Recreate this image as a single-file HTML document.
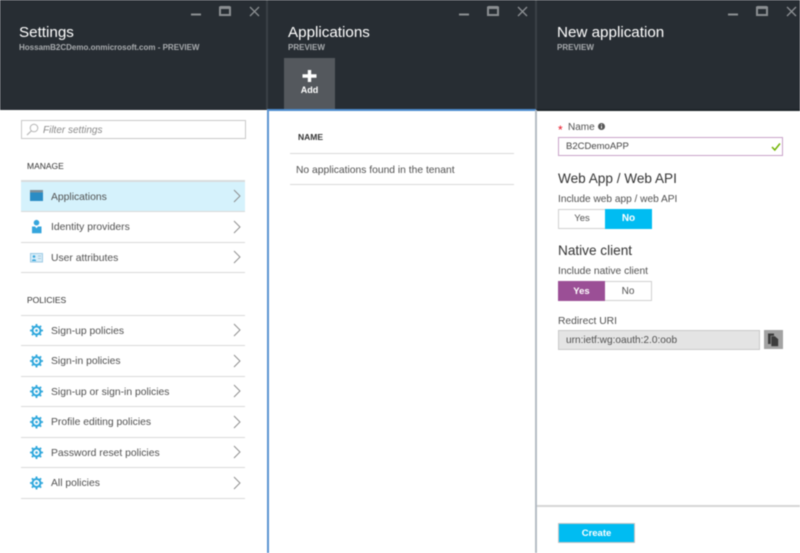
<!DOCTYPE html>
<html><head><meta charset="utf-8"><style>
html,body{margin:0;padding:0;width:800px;height:553px;overflow:hidden;background:#fff}
body{font-family:"Liberation Sans",sans-serif;position:relative}
#w{position:absolute;left:0;top:0;width:800px;height:553px;filter:blur(.4px);overflow:hidden}
.a,.t{position:absolute;white-space:nowrap}
.hd{position:absolute;top:0;height:110px;background:#272d33}
.h1{position:absolute;top:22.5px;font-size:15.2px;line-height:20px;color:#fff}
.sub{position:absolute;top:42px;font-size:8px;line-height:12px;font-weight:bold;color:#a9acaf}
.line{position:absolute;height:1px;background:#d9d9d9}
.item{position:absolute;left:51px;font-size:10.35px;line-height:14px;color:#505050}
.sec{position:absolute;left:27px;font-size:8.5px;line-height:12px;color:#333}
</style></head><body><div id="w">
<div class="hd" style="left:0;width:800px"></div>
<div class="a" style="left:266px;top:0;width:2px;height:110px;background:#3a4046"></div>
<div class="a" style="left:535px;top:0;width:2px;height:110px;background:#3a4046"></div>

<svg class="a" style="left:0;top:0" width="800" height="24" fill="none" stroke="#8b8f92">
<g><path d="M191 14.500h10" stroke-width="2"/><rect x="220" y="7.500" width="10" height="7.500" stroke-width="2"/><path d="M220 7.500h10" stroke-width="3"/><path d="M250 7l9 9M259 7l-9 9" stroke-width="1.300"/></g>
<g transform="translate(268 0)"><path d="M191 14.500h10" stroke-width="2"/><rect x="220" y="7.500" width="10" height="7.500" stroke-width="2"/><path d="M220 7.500h10" stroke-width="3"/><path d="M250 7l9 9M259 7l-9 9" stroke-width="1.300"/></g>
<g transform="translate(537 0)"><path d="M191 14.500h10" stroke-width="2"/><rect x="220" y="7.500" width="10" height="7.500" stroke-width="2"/><path d="M220 7.500h10" stroke-width="3"/><path d="M250 7l9 9M259 7l-9 9" stroke-width="1.300"/></g>
</svg>

<div class="h1" style="left:19px">Settings</div>
<div class="sub" style="left:19px">HossamB2CDemo.onmicrosoft.com - PREVIEW</div>
<div class="h1" style="left:288px">Applications</div>
<div class="sub" style="left:288px">PREVIEW</div>
<div class="h1" style="left:557px">New application</div>
<div class="sub" style="left:557px">PREVIEW</div>

<div class="a" style="left:284px;top:58px;width:51px;height:51px;background:#54585d"></div>
<svg class="a" style="left:284px;top:58px" width="51" height="30"><path d="M25.500 12v12M18.500 18h14" stroke="#fff" stroke-width="3.400"/></svg>
<div class="t" style="left:284px;width:51px;top:84px;text-align:center;font-size:9px;line-height:12px;font-weight:bold;color:#fff">Add</div>

<!-- panel borders -->
<div class="a" style="left:267px;top:109px;width:533px;height:2px;background:#1e2429"></div>
<div class="a" style="left:267px;top:109px;width:269px;height:2px;background:#4d8ccf"></div>
<div class="a" style="left:267px;top:109px;width:2px;height:444px;background:#5b93d1"></div>
<div class="a" style="left:535px;top:110px;width:2px;height:443px;background:#b4bcc4"></div>

<!-- Settings -->
<div class="a" style="left:21px;top:120px;width:223px;height:17px;border:1px solid #c9c9c9;background:#fff"></div>
<svg class="a" style="left:25px;top:122px" width="16" height="15" fill="none" stroke="#b4b4b4"><circle cx="9" cy="6" r="3.800"/><path d="M6.200 9L2 13" stroke-width="1.200"/></svg>
<div class="t" style="left:43px;top:124px;font-size:10px;line-height:14px;font-style:italic;color:#8a8a8a">Filter settings</div>
<div class="sec" style="top:160px">MANAGE</div>

<div class="a" style="left:21px;top:181px;width:224px;height:30px;background:#d5f2fc"></div>
<div class="line" style="left:21px;width:224px;top:180px;height:2px;background:#d8dcdd"></div>
<div class="line" style="left:21px;width:224px;top:211px"></div>
<div class="line" style="left:21px;width:224px;top:242px"></div>
<div class="line" style="left:21px;width:224px;top:272px"></div>
<div class="sec" style="top:294px">POLICIES</div>
<div class="line" style="left:21px;width:224px;top:315px"></div>
<div class="line" style="left:21px;width:224px;top:345px"></div>
<div class="line" style="left:21px;width:224px;top:376px"></div>
<div class="line" style="left:21px;width:224px;top:406px"></div>
<div class="line" style="left:21px;width:224px;top:437px"></div>
<div class="line" style="left:21px;width:224px;top:467px"></div>
<div class="line" style="left:21px;width:224px;top:498px"></div>

<div class="item" style="top:191px">Applications</div>
<div class="item" style="top:221px">Identity providers</div>
<div class="item" style="top:252px">User attributes</div>
<div class="item" style="top:325px">Sign-up policies</div>
<div class="item" style="top:355px">Sign-in policies</div>
<div class="item" style="top:386px">Sign-up or sign-in policies</div>
<div class="item" style="top:416px">Profile editing policies</div>
<div class="item" style="top:447px">Password reset policies</div>
<div class="item" style="top:477px">All policies</div>

<svg class="a" style="left:0;top:180px" width="267" height="320" fill="none">
<defs><g id="gear"><circle r="4" fill="none" stroke="#2ea7dc" stroke-width="2"/><circle r="1.300" fill="#2ea7dc"/>
<g stroke="#2ea7dc" stroke-width="1.800"><path d="M0-6.500v2M0 4.500v2M-6.500 0h2M4.500 0h2M-4.600-4.600l1.400 1.400M3.200 3.200l1.400 1.400M-4.600 4.600l1.400-1.400M3.200-3.200l1.400-1.400"/></g></g>
<path id="ch" d="M-3-6L3 0L-3 6" stroke="#8a8a8a" stroke-width=".9"/></defs>
<rect x="30" y="10" width="13" height="11" fill="#2a8cc4"/><rect x="30" y="10" width="13" height="2.500" fill="#7d8f9a"/>
<circle cx="36.500" cy="42.700" r="2.800" fill="#35a5dc"/><path d="M32 46.500h3l1.500 1.800 1.500-1.800h3.500v6.800h-9.500z" fill="#35a5dc"/>
<rect x="30.500" y="73.500" width="12" height="8.500" fill="#d8eef9" stroke="#9fcbe4"/><circle cx="34" cy="76.500" r="1.300" fill="#35a5dc"/><path d="M32 81v-1q2-1.500 4 0v1z" fill="#35a5dc"/><path d="M38 76h3M38 78.500h3" stroke="#a8c9dc"/>
<use href="#gear" x="36.500" y="150.500"/><use href="#gear" x="36.500" y="181"/><use href="#gear" x="36.500" y="211.500"/><use href="#gear" x="36.500" y="242"/><use href="#gear" x="36.500" y="272.500"/><use href="#gear" x="36.500" y="303"/>
<use href="#ch" x="237" y="16"/><use href="#ch" x="237" y="47"/><use href="#ch" x="237" y="77"/><use href="#ch" x="237" y="150"/><use href="#ch" x="237" y="181"/><use href="#ch" x="237" y="211"/><use href="#ch" x="237" y="242"/><use href="#ch" x="237" y="272"/><use href="#ch" x="237" y="303"/>
</svg>

<!-- Applications -->
<div class="t" style="left:298px;top:131px;font-size:8.500px;line-height:12px;font-weight:bold;color:#333">NAME</div>
<div class="line" style="left:290px;width:224px;top:153px"></div>
<div class="t" style="left:296px;top:164px;font-size:10.300px;line-height:14px;color:#505050">No applications found in the tenant</div>
<div class="line" style="left:290px;width:224px;top:184px"></div>

<!-- New application -->
<div class="t" style="left:558px;top:124px;font-size:12px;line-height:12px;color:#e81123">*</div>
<div class="t" style="left:568px;top:121px;font-size:10px;line-height:14px;color:#505050">Name</div>
<svg class="a" style="left:597px;top:122px" width="9" height="9"><circle cx="4.500" cy="4.500" r="3.500" fill="#555"/><path d="M4.500 4v2.500M4.500 2.300v1" stroke="#fff"/></svg>
<div class="a" style="left:558px;top:137px;width:223px;height:17px;border:1px solid #c9a3c9;background:#fff"></div>
<div class="t" style="left:566px;top:140px;font-size:9.500px;line-height:14px;color:#444">B2CDemoAPP</div>
<svg class="a" style="left:770px;top:141px" width="12" height="11" fill="none"><path d="M2 6l2.800 3L10 2.500" stroke="#6fb300" stroke-width="1.500"/></svg>

<div class="t" style="left:558px;top:170px;font-size:13.600px;line-height:17px;color:#333">Web App / Web API</div>
<div class="t" style="left:558px;top:193px;font-size:10.150px;line-height:14px;color:#505050">Include web app / web API</div>
<div class="a" style="left:558px;top:209px;width:46px;height:18px;border:1px solid #d0d0d0;border-right:0;text-align:center;font-size:9.500px;line-height:18px;color:#505050;background:#fff">Yes</div>
<div class="a" style="left:605px;top:209px;width:47px;height:20px;background:#00bcf2;text-align:center;font-size:10px;line-height:20px;font-weight:bold;color:#fff">No</div>

<div class="t" style="left:558px;top:242px;font-size:13.600px;line-height:17px;color:#333">Native client</div>
<div class="t" style="left:558px;top:265px;font-size:10.250px;line-height:14px;color:#505050">Include native client</div>
<div class="a" style="left:558px;top:281px;width:47px;height:20px;background:#9b4f96;text-align:center;font-size:9.500px;line-height:21px;font-weight:bold;color:#fff">Yes</div>
<div class="a" style="left:605px;top:281px;width:46px;height:18px;border:1px solid #d0d0d0;border-left:0;text-align:center;font-size:10px;line-height:19px;color:#505050;background:#fff">No</div>

<div class="t" style="left:558px;top:315px;font-size:10.300px;line-height:14px;color:#505050">Redirect URI</div>
<div class="a" style="left:558px;top:330px;width:200px;height:18px;border:1px solid #c8c8c8;background:#e4e4e4"></div>
<div class="t" style="left:566px;top:334px;font-size:10.100px;line-height:14px;color:#505050">urn:ietf:wg:oauth:2.0:oob</div>
<div class="a" style="left:764px;top:330px;width:19px;height:19px;background:#a3a3a3"></div>
<svg class="a" style="left:764px;top:330px" width="19" height="19"><path d="M4 3.500h6v10.500h-6z" fill="#3c3c3c"/><path d="M7 6h4l3.500 3v7.500h-7.500z" fill="#3c3c3c" stroke="#a3a3a3" stroke-width=".6"/></svg>

<div class="line" style="left:537px;width:263px;top:505px;height:2px;background:#d6d6d6"></div>
<div class="a" style="left:558px;top:523px;width:75px;height:18px;border:1px solid #c4c4c4;background:#00bcf2;text-align:center;font-size:9.500px;line-height:20px;font-weight:bold;color:#fff">Create</div>
</div></body></html>
